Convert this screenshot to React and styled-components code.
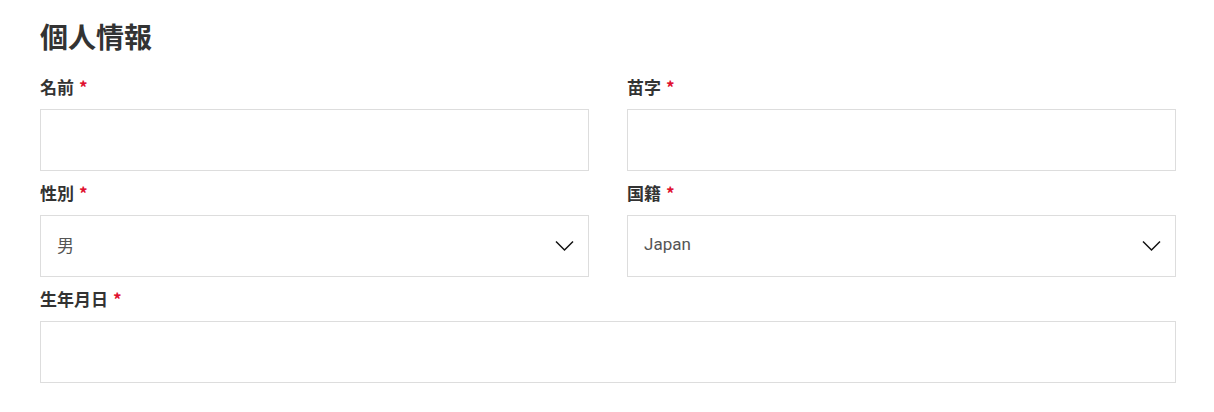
import React from "react";
import styled, { createGlobalStyle } from "styled-components";

const GlobalStyle = createGlobalStyle`
  html, body { margin: 0; padding: 0; background: #fff; }
  body { font-family: Roboto, "Noto Sans CJK JP", sans-serif; }
  * { box-sizing: border-box; }
`;

const Page = styled.section`
  padding: 19px 38px 20px 40px;
`;

const Title = styled.h2`
  margin: 0 0 24px;
  font-family: "Noto Sans CJK JP", sans-serif;
  font-size: 28px;
  line-height: 34px;
  font-weight: 700;
  color: #333;
`;

const Grid = styled.div`
  display: grid;
  grid-template-columns: 1fr 1fr;
  column-gap: 38px;
  row-gap: 12px;
`;

const Field = styled.div`
  display: flex;
  flex-direction: column;
  grid-column: ${(p) => (p.$full ? "1 / -1" : "auto")};
`;

const Label = styled.label`
  font-family: "Noto Sans CJK JP", sans-serif;
  font-size: 17px;
  line-height: 22px;
  font-weight: 700;
  color: #333;
  margin-bottom: 10px;
  transform: translateY(-1px);
`;

const Required = styled.span`
  color: #e0102f;
  margin-left: 5px;
`;

const Box = styled.div`
  height: 62px;
  border: 1px solid #ddd;
  background: #fff;
  display: flex;
  align-items: center;
  padding: 0 14px 0 16px;
  font-family: Roboto, "Noto Sans CJK JP", sans-serif;
  font-size: 17px;
  color: #555;
`;

const Value = styled.span`
  flex: 1;
  margin-top: -4px;
`;

const Chevron = () => (
  <svg width="19" height="12" viewBox="0 0 19 12" fill="none">
    <path d="M1 1.5 L9.5 10 L18 1.5" stroke="#111" strokeWidth="1.5" />
  </svg>
);

const FieldItem = ({ label, value, select, full }) => (
  <Field $full={full}>
    <Label>
      {label}
      <Required>*</Required>
    </Label>
    <Box>
      <Value>{value}</Value>
      {select && <Chevron />}
    </Box>
  </Field>
);

export default function App() {
  return (
    <>
      <GlobalStyle />
      <Page>
        <Title>個人情報</Title>
        <Grid>
          <FieldItem label="名前" />
          <FieldItem label="苗字" />
          <FieldItem label="性別" value="男" select />
          <FieldItem label="国籍" value="Japan" select />
          <FieldItem label="生年月日" full />
        </Grid>
      </Page>
    </>
  );
}
